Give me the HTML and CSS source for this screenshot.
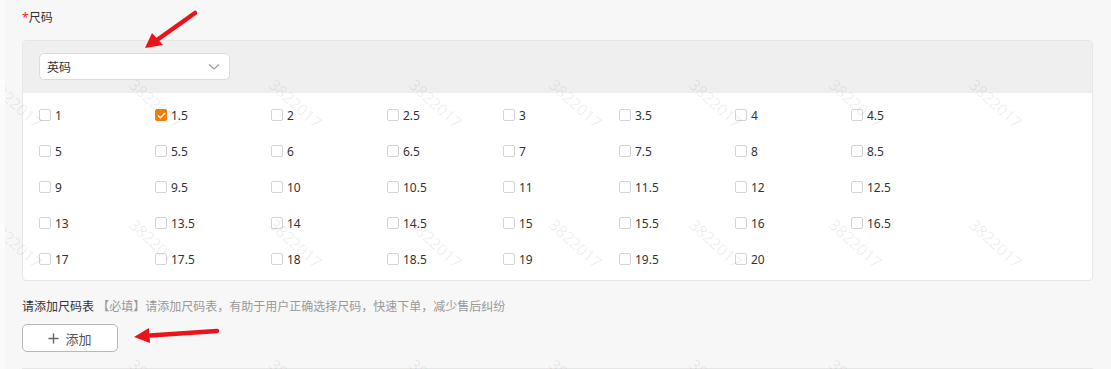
FILE: index.html
```html
<!DOCTYPE html>
<html>
<head>
    <meta charset="UTF-8">
    <title>尺码</title>
    <link rel="stylesheet" href="styles.css">
</head>
<body>
    <div class="page">
        <div class="form-item">
            <div class="label"><span class="required">*</span>尺码</div>
            <div class="size-card">
                <div class="size-head">
                    <div class="select">
                        <span>英码</span>
                        <svg class="chevron" width="12" height="8" viewBox="0 0 12 8"><path d="M1 1.5 L6 6 L11 1.5" fill="none" stroke="#999" stroke-width="1.1"/></svg>
                    </div>
                </div>
                <div class="size-grid">
                    <label class="check"><i class="box"></i>1</label>
                    <label class="check on"><i class="box"><svg width="9" height="7" viewBox="0 0 9 7"><path d="M1 3.6 L3.4 5.8 L8 1" fill="none" stroke="#fff" stroke-width="1.4"/></svg></i>1.5</label>
                    <label class="check"><i class="box"></i>2</label>
                    <label class="check"><i class="box"></i>2.5</label>
                    <label class="check"><i class="box"></i>3</label>
                    <label class="check"><i class="box"></i>3.5</label>
                    <label class="check"><i class="box"></i>4</label>
                    <label class="check"><i class="box"></i>4.5</label>
                    <label class="check"><i class="box"></i>5</label>
                    <label class="check"><i class="box"></i>5.5</label>
                    <label class="check"><i class="box"></i>6</label>
                    <label class="check"><i class="box"></i>6.5</label>
                    <label class="check"><i class="box"></i>7</label>
                    <label class="check"><i class="box"></i>7.5</label>
                    <label class="check"><i class="box"></i>8</label>
                    <label class="check"><i class="box"></i>8.5</label>
                    <label class="check"><i class="box"></i>9</label>
                    <label class="check"><i class="box"></i>9.5</label>
                    <label class="check"><i class="box"></i>10</label>
                    <label class="check"><i class="box"></i>10.5</label>
                    <label class="check"><i class="box"></i>11</label>
                    <label class="check"><i class="box"></i>11.5</label>
                    <label class="check"><i class="box"></i>12</label>
                    <label class="check"><i class="box"></i>12.5</label>
                    <label class="check"><i class="box"></i>13</label>
                    <label class="check"><i class="box"></i>13.5</label>
                    <label class="check"><i class="box"></i>14</label>
                    <label class="check"><i class="box"></i>14.5</label>
                    <label class="check"><i class="box"></i>15</label>
                    <label class="check"><i class="box"></i>15.5</label>
                    <label class="check"><i class="box"></i>16</label>
                    <label class="check"><i class="box"></i>16.5</label>
                    <label class="check"><i class="box"></i>17</label>
                    <label class="check"><i class="box"></i>17.5</label>
                    <label class="check"><i class="box"></i>18</label>
                    <label class="check"><i class="box"></i>18.5</label>
                    <label class="check"><i class="box"></i>19</label>
                    <label class="check"><i class="box"></i>19.5</label>
                    <label class="check"><i class="box"></i>20</label>
                </div>
            </div>
        </div>

        <div class="form-item chart">
            <div class="hint"><span class="hint-title">请添加尺码表</span> 【必填】请添加尺码表，有助于用户正确选择尺码，快速下单，减少售后纠纷</div>
            <button class="add-btn">
                <svg width="11" height="11" viewBox="0 0 11 11"><path d="M5.5 0.5 V10.5 M0.5 5.5 H10.5" stroke="#666" stroke-width="1.4"/></svg>
                添加
            </button>
        </div>

        <!-- watermark layer -->
        <div class="watermarks">
            <span class="wm" style="left:-8px;top:76px">3822017</span>
            <span class="wm" style="left:132px;top:76px">3822017</span>
            <span class="wm" style="left:272px;top:76px">3822017</span>
            <span class="wm" style="left:412px;top:76px">3822017</span>
            <span class="wm" style="left:552px;top:76px">3822017</span>
            <span class="wm" style="left:692px;top:76px">3822017</span>
            <span class="wm" style="left:832px;top:76px">3822017</span>
            <span class="wm" style="left:972px;top:76px">3822017</span>
            <span class="wm" style="left:-8px;top:216px">3822017</span>
            <span class="wm" style="left:132px;top:216px">3822017</span>
            <span class="wm" style="left:272px;top:216px">3822017</span>
            <span class="wm" style="left:412px;top:216px">3822017</span>
            <span class="wm" style="left:552px;top:216px">3822017</span>
            <span class="wm" style="left:692px;top:216px">3822017</span>
            <span class="wm" style="left:832px;top:216px">3822017</span>
            <span class="wm" style="left:972px;top:216px">3822017</span>
            <span class="wm" style="left:132px;top:356px">3822017</span>
            <span class="wm" style="left:272px;top:356px">3822017</span>
            <span class="wm" style="left:412px;top:356px">3822017</span>
            <span class="wm" style="left:552px;top:356px">3822017</span>
            <span class="wm" style="left:692px;top:356px">3822017</span>
            <span class="wm" style="left:832px;top:356px">3822017</span>
        </div>

        <!-- annotation arrows -->
        <svg class="arrows" width="1111" height="369" viewBox="0 0 1111 369">
            <g stroke="#e8141a" stroke-width="4.5" stroke-linecap="round" fill="#e8141a">
                <line x1="195" y1="13" x2="157" y2="40"/>
                <line x1="217" y1="331" x2="150" y2="335.5"/>
            </g>
            <g fill="#e8141a">
                <polygon points="145,48 152,33 163,45"/>
                <polygon points="134,337 149,328 150,343"/>
            </g>
        </svg>
    </div>
</body>
</html>
```

FILE: styles.css
```css
body {
    margin: 0;
    background-color: #fcfcfc;
    font-family: "Noto Sans", "Noto Sans CJK SC", sans-serif;
    font-size: 12px;
    color: #333;
}
.page {
    position: relative;
    margin-left: 5px;
    height: 369px;
    box-sizing: border-box;
    padding: 9px 18px 0 17px;
    background-color: #f7f7f7;
    overflow: hidden;
}
.label {
    line-height: 18px;
    color: #333;
}
.required {
    color: #f5222d;
}
.size-card {
    margin-top: 13px;
    width: 1071px;
    box-sizing: border-box;
    border: 1px solid #e6e6e6;
    border-radius: 4px;
    background-color: #fff;
    overflow: hidden;
}
.size-head {
    background-color: #efefef;
    padding: 12px 16px 13px;
}
.select {
    width: 191px;
    height: 27px;
    box-sizing: border-box;
    display: flex;
    align-items: center;
    justify-content: space-between;
    padding: 0 8px 0 7px;
    background-color: #fff;
    border: 1px solid #dcdcdc;
    border-radius: 5px;
    color: #333;
}
.chevron {
    margin-right: 1px;
}
.size-grid {
    display: grid;
    grid-template-columns: repeat(8, 116px);
    grid-auto-rows: 36px;
    padding: 4px 16px 3px;
}
.check {
    display: flex;
    align-items: center;
    gap: 4px;
    color: #333;
}
.box {
    width: 10px;
    height: 10px;
    border: 1px solid #d4d4d4;
    border-radius: 2px;
    background-color: #fff;
    display: flex;
    align-items: center;
    justify-content: center;
}
.check.on .box {
    background-color: #f77c08;
    border-color: #f77c08;
}
.chart {
    margin-top: 17px;
    padding-bottom: 16px;
    border-bottom: 1px solid #e6e6e6;
}
.hint {
    line-height: 18px;
    color: #999;
}
.hint-title {
    color: #333;
}
.add-btn {
    margin-top: 8px;
    width: 96px;
    height: 28px;
    display: flex;
    align-items: center;
    justify-content: center;
    gap: 6px;
    background-color: #fff;
    border: 1px solid #b8b8b8;
    border-radius: 5px;
    font-family: "Noto Sans", "Noto Sans CJK SC", sans-serif;
    font-size: 13px;
    color: #555;
}
.watermarks {
    position: absolute;
    inset: 0;
    pointer-events: none;
}
.wm {
    position: absolute;
    font-size: 16px;
    line-height: 16px;
    color: rgba(0, 0, 0, 0.07);
    transform: rotate(42deg);
    transform-origin: left top;
}
.arrows {
    position: absolute;
    left: -5px;
    top: 0;
    pointer-events: none;
}
```
